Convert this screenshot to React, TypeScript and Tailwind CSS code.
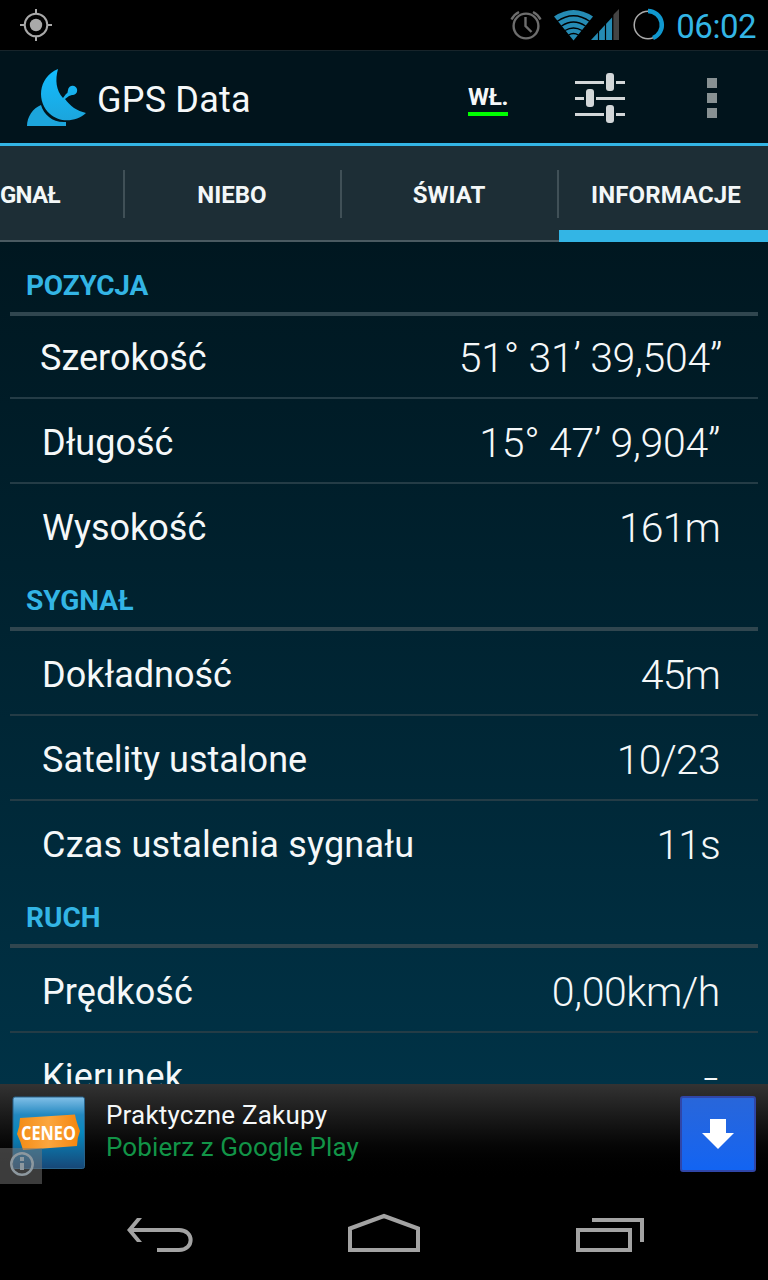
import type { ReactNode } from 'react';
import clsx from 'clsx';

type Row = { label: string; value: string; labelClass?: string; valueClass?: string };
type SectionData = { title: string; headerClass: string; rows: Row[] };

const sections: SectionData[] = [
	{
		title: 'POZYCJA',
		headerClass: 'h-[74px] tracking-[-0.2px]',
		rows: [
			{ label: 'Szerokość', value: '51° 31’ 39,504”', valueClass: 'tracking-[-0.3px]' },
			{ label: 'Długość', value: '15° 47’ 9,904”', valueClass: 'tracking-[-0.3px] pt-[2px]' },
			{ label: 'Wysokość', value: '161m', valueClass: 'tracking-[-0.9px] pt-px' },
		],
	},
	{
		title: 'SYGNAŁ',
		headerClass: 'h-[62px]',
		rows: [
			{ label: 'Dokładność', value: '45m', valueClass: 'tracking-[-0.9px] pt-px' },
			{ label: 'Satelity ustalone', value: '10/23', valueClass: 'tracking-[-0.8px] pt-px' },
			{ label: 'Czas ustalenia sygnału', labelClass: 'tracking-[0.2px]', value: '11s', valueClass: 'tracking-[-0.9px] pt-px' },
		],
	},
	{
		title: 'RUCH',
		headerClass: 'h-[62px]',
		rows: [
			{ label: 'Prędkość', value: '0,00km/h', labelClass: 'tracking-[0.1px]', valueClass: 'tracking-[-0.4px] pt-px' },
			{ label: 'Kierunek', value: '-', labelClass: 'tracking-[0.2px]', valueClass: 'origin-right scale-x-130 pt-[3px] pr-px' },
		],
	},
];

function StatusBar() {
	return (
		<div className="flex h-[50px] shrink-0 items-center bg-black text-[#33b5e5]">
			<svg className="ml-5 h-8 w-8" viewBox="0 0 32 32" fill="none" stroke="#a9a9a9" strokeWidth="2">
				<circle cx="16" cy="16" r="11.3" />
				<circle cx="16" cy="16" r="6.2" fill="#a9a9a9" stroke="none" />
				<path d="M16 0v5M16 27v5M0 16h5M27 16h5" />
			</svg>
			<svg className="ml-auto h-[50px] w-[160px]" viewBox="0 0 160 50" fill="none">
				{/* Alarm clock */}
				<g stroke="#6d6d6d" strokeWidth="2.4">
					<circle cx="16" cy="26" r="12.4" />
					<path d="M15.5 17v9l6 6M1.500 19.500Q4 14.500 9 12M30.500 19.500Q28 14.500 23 12" />
				</g>
				{/* Wi-Fi */}
				<path d="M44 16.500Q63.500 3.500 83 16.500L63.500 40.500Z" fill="#258bb4" />
				<g stroke="#000" strokeWidth="1.400">
					<path d="M47 21.500Q63.500 10 80 21.500M51.500 26Q63.500 18 75.500 26M55 30.500Q63.500 25.500 72 30.500M58.500 35Q63.500 32 68.500 35" />
				</g>
				{/* Mobile signal */}
				<path d="M81 40L102.500 17V40Z" fill="#258bb4" />
				<path d="M103 40V15L109 9v31Z" fill="#444" />
				<path d="M88.500 20v21M95.500 20v21M102.800 12v29" stroke="#000" strokeWidth="1.200" />
				{/* Battery ring */}
				<circle cx="138" cy="25" r="13.800" stroke="#aaa" strokeWidth="1.500" />
				<path d="M138 11a14 14 0 0 1 5 27" stroke="#1098cf" strokeWidth="4.500" />
			</svg>
			<span className="ml-[6px] mr-3 mt-[2px] w-20 whitespace-nowrap text-right text-[33px] leading-none tracking-[-0.5px]">06:02</span>
		</div>
	);
}

function ActionBar() {
	return (
		<header className="flex h-24 shrink-0 items-center border-b-[3px] border-t border-b-[#33b5e5] border-t-[#17242a] bg-[#01141c] pt-[2px]">
			<svg className="ml-[26px] h-[60px] w-[62px]" viewBox="0 0 62 60">
				<defs>
					<linearGradient id="dish" x1="0" y1="0" x2="0" y2="1">
						<stop offset="0" stopColor="#12bdff" />
						<stop offset="1" stopColor="#1ca5dc" />
					</linearGradient>
				</defs>
				<path fill="url(#dish)" d="M32 1C29 12 30 22 37 30L40 26Q42 25 42 22A4.600 4.600 0 1 1 46 27L43 28L39 31C44 38 51 43 60 45C50 54 34 55 24 46C11 35 11 10 32 1Z" />
				<path fill="#1ca5dc" d="M1 58C1 49 7 40 15 37C18 47 27 55 40 54V58Z" />
			</svg>
			<h1 className="ml-[9px] mt-1 text-[36px] leading-none tracking-[0.2px]">GPS Data</h1>
			<div className="ml-auto mt-[5px] flex w-10 flex-col items-center border-b-4 border-[#00ff00] pb-[3px] text-[24px] leading-[24px] font-bold tracking-[-0.5px]">WŁ.</div>
			<svg className="ml-[67px] h-[52px] w-[50px]" viewBox="0 0 50 52" fill="#d2d6d8">
				<path d="M0 9h29v3H0zM41 9h9v3h-9zM0 25h9v3H0zM21 25h29v3H21zM0 41h29v3H0zM41 41h9v3h-9z" />
				<rect x="31" y="1" width="8" height="18" rx="3" />
				<rect x="11" y="17" width="8" height="18" rx="3" />
				<rect x="31" y="33" width="8" height="18" rx="3" />
			</svg>
			<div className="ml-[82px] mr-[51px] flex flex-col gap-[5px]">
				<i className="h-[10px] w-[10px] bg-[#889193]" />
				<i className="h-[10px] w-[10px] bg-[#889193]" />
				<i className="h-[10px] w-[10px] bg-[#889193]" />
			</div>
		</header>
	);
}

function Tab({ className, active, children }: { className: string; active?: boolean; children: ReactNode }) {
	return (
		<div
			className={clsx(
				'flex h-full shrink-0 flex-col',
				active ? 'border-b-[12px] border-[#33b5e5]' : 'border-b-2 border-[#4a5a61]',
				className,
			)}
		>
			<span className="mt-[35px] whitespace-nowrap leading-[28px]">{children}</span>
		</div>
	);
}

function Tabs() {
	return (
		<nav className="flex h-24 shrink-0 overflow-hidden bg-[#1d2e36] text-[24px] font-bold text-[#f3f7f8]">
			<Tab className="w-[123px] items-start tracking-[-0.8px]">GNAŁ</Tab>
			<Divider />
			<Tab className="w-[215px] items-center pr-px">NIEBO</Tab>
			<Divider />
			<Tab className="w-[215px] items-center pr-px">ŚWIAT</Tab>
			<Divider />
			<Tab className="w-[209px] items-center pl-[5px] tracking-[0.1px]" active>INFORMACJE</Tab>
		</nav>
	);
}

function Divider() {
	return (
		<div className="h-full w-[2px] shrink-0 border-b-2 border-[#4a5a61] pt-6">
			<div className="h-12 bg-[#405057]" />
		</div>
	);
}

function Section({ title, headerClass, rows, first }: SectionData & { first: boolean }) {
	return (
		<section className="px-[10px]">
			<h2 className={clsx('flex items-end border-b-4 border-[#30464f] pb-[10px] pl-4 text-[28px] leading-[32px] font-bold text-[#33b5e5]', headerClass)}>
				{title}
			</h2>
			{rows.map((row, i) => (
				<div
					key={row.label}
					className={clsx(
						'flex items-center justify-between border-b-2',
						first && i === 0 ? 'h-[83px] pt-[3px] pl-[30px] pr-9' : 'h-[85px] pt-1 pl-8 pr-[38px]',
						i === 2 ? 'border-transparent' : 'border-[#243c46]',
					)}
				>
					<span className={clsx('whitespace-nowrap text-[36px] leading-none', row.labelClass)}>{row.label}</span>
					<span className={clsx('whitespace-nowrap text-[41px] leading-none font-light', row.valueClass)}>{row.value}</span>
				</div>
			))}
		</section>
	);
}

function AdBanner() {
	return (
		<div className="relative flex h-[100px] shrink-0 bg-linear-to-b from-[#333] to-black">
			<svg className="ml-3 mt-3 h-[74px] w-[74px]" viewBox="0 0 74 74">
				<defs>
					<linearGradient id="tile" x1="0" y1="0" x2="0" y2="1">
						<stop offset="0" stopColor="#82c0e8" />
						<stop offset=".25" stopColor="#2388c0" />
						<stop offset=".5" stopColor="#0788be" />
						<stop offset="1" stopColor="#174777" />
					</linearGradient>
					<linearGradient id="ticket" x1="0" y1="0" x2="1" y2="0">
						<stop offset="0" stopColor="#f38b14" />
						<stop offset=".5" stopColor="#fba63f" />
						<stop offset="1" stopColor="#f5850c" />
					</linearGradient>
				</defs>
				<rect x="1" y="1" width="71.500" height="71.500" rx="2" fill="url(#tile)" stroke="#286188" />
				<path d="M8 22L63 18.500Q64 25 68 35Q65 42 65 50L11 54Q9 46 5 38Q8 30 8 22Z" fill="url(#ticket)" />
				<text x="9" y="44" textLength="55" lengthAdjust="spacingAndGlyphs" fill="white" fontFamily="Open Sans, sans-serif" fontSize="19" fontWeight="700">CENEO</text>
			</svg>
			<div className="ml-5 mt-[15px] whitespace-nowrap text-[26px] leading-[32px]">
				<p className="tracking-[0.2px]">Praktyczne Zakupy</p>
				<p className="tracking-[0.1px] text-[#129447]">Pobierz z Google Play</p>
			</div>
			<div className="ml-auto mr-3 mt-3 flex h-[76px] w-[76px] items-center justify-center rounded-[3px] border-2 border-[#3046a8] bg-linear-to-b from-[#2866da] to-[#1264f2]">
				<svg className="h-[30px] w-8" viewBox="0 0 32 30"><path d="M8 0h16v14h8L16 30 0 14h8z" fill="white" /></svg>
			</div>
			<div className="absolute bottom-0 left-0 h-9 w-[42px] bg-[#77777780]">
				<svg className="ml-[10px] mt-1 h-6 w-6" viewBox="0 0 24 24" fill="none" stroke="#8d989f">
					<circle cx="12" cy="12" r="10.700" strokeWidth="2.500" />
					<path d="M12 5v4M12 11v7" strokeWidth="4" />
				</svg>
			</div>
		</div>
	);
}

function NavBar() {
	return (
		<div className="flex h-24 shrink-0 items-center bg-black">
			<svg className="h-24 w-full" viewBox="0 0 768 96" fill="none" stroke="#a3a3a3" strokeWidth="4">
				<path d="M130 46H179C194.500 46 194.500 66 179 66H157" />
				<path d="M137 34h5l-10 12 10 12h-5L127 46z" fill="#a3a3a3" stroke="none" />
				<path d="M350 44.500L384 32L418 44.500V66H350Z" />
				<path d="M578 46h52v20h-52zM592 36H642v22" />
			</svg>
		</div>
	);
}

export default function App() {
	return (
		<div className="flex h-[1280px] w-[768px] flex-col overflow-hidden bg-[#001720] font-[Roboto,sans-serif] text-[#f5f8f9]">
			<StatusBar />
			<ActionBar />
			<Tabs />
			<main className="min-h-0 flex-1 overflow-hidden bg-linear-to-b from-[#001720] to-[#003246]">
				{sections.map((section, i) => (
					<Section key={section.title} {...section} first={i === 0} />
				))}
			</main>
			<AdBanner />
			<NavBar />
		</div>
	);
}
